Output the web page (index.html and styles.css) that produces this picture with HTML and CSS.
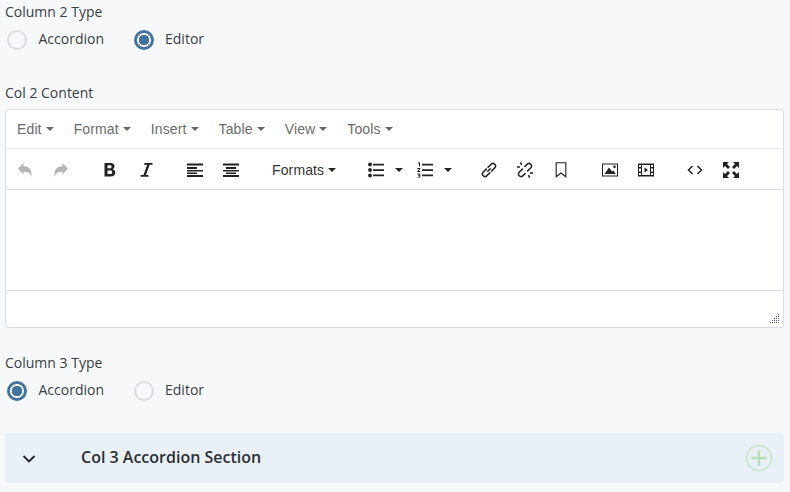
FILE: index.html
```html
<!DOCTYPE html>
<html lang="en">
<head>
<meta charset="utf-8">
<title>Columns</title>
<link rel="stylesheet" href="styles.css">
</head>
<body>
<main class="form">
  <div class="field">
    <div class="label">Column 2 Type</div>
    <div class="radios">
      <span class="radio"></span><span class="radio-text">Accordion</span>
      <span class="radio radio-on"></span><span class="radio-text">Editor</span>
    </div>
  </div>

  <div class="field field-editor">
    <div class="label">Col 2 Content</div>
    <div class="editor">
      <div class="menubar">
        <span class="menu">Edit<i class="caret"></i></span>
        <span class="menu">Format<i class="caret"></i></span>
        <span class="menu">Insert<i class="caret"></i></span>
        <span class="menu">Table<i class="caret"></i></span>
        <span class="menu">View<i class="caret"></i></span>
        <span class="menu">Tools<i class="caret"></i></span>
      </div>
      <div class="toolbar">
        <div class="group">
          <span class="btn"><svg viewBox="0 0 16 16" class="ico disabled"><path d="M1 6.500 6.500 1v3.300c5 0 8.500 2.700 8 10.700-1.200-4-3.500-5.200-8-5.200V12.500z"/></svg></span>
          <span class="btn"><svg viewBox="0 0 16 16" class="ico disabled"><path d="M15 6.500 9.500 1v3.300c-5 0-8.500 2.700-8 10.700 1.200-4 3.500-5.200 8-5.200V12.500z"/></svg></span>
        </div>
        <div class="group">
          <span class="btn"><svg viewBox="0 0 16 16" class="ico"><path fill-rule="evenodd" d="M2.500 1h6.300c2.400 0 3.700 1.300 3.700 3.300 0 1.400-.7 2.400-1.900 2.900 1.700.4 2.700 1.600 2.700 3.300 0 2.600-1.800 4-4.500 4H2.500zm3 2.300v3h2.600c1 0 1.500-.6 1.500-1.500s-.5-1.500-1.500-1.500zm0 5.200v3.500h2.900c1.200 0 1.800-.6 1.800-1.800s-.6-1.700-1.800-1.700z"/></svg></span>
          <span class="btn"><svg viewBox="0 0 16 16" class="ico"><path d="M6.500 1h8v1.800h-2.900L8 13h2.500v1.800h-8V13h3L9.100 2.800H6z"/></svg></span>
        </div>
        <div class="group">
          <span class="btn"><svg viewBox="0 0 16 16" class="ico"><path d="M0 1.500h16v2H0zM0 5h10v2H0zM0 8h16v1.500H0zM0 10.500h10V12H0zM0 13h16v2H0z"/></svg></span>
          <span class="btn"><svg viewBox="0 0 16 16" class="ico"><path d="M0 1.500h16v2H0zM3 5h10v2H3zM0 8h16v1.500H0zM3 10.500h10V12H3zM0 13h16v2H0z"/></svg></span>
        </div>
        <div class="group">
          <span class="btn-text">Formats<i class="caret caret-dark"></i></span>
        </div>
        <div class="group group-lists">
          <span class="btn btn-split"><svg viewBox="0 0 16 16" class="ico"><path d="M5 1.800h11v1.700H5zM5 7.200h11v1.700H5zM5 12.500h11v1.700H5z"/><circle cx="2" cy="2.500" r="1.900"/><circle cx="2" cy="8" r="1.900"/><circle cx="2" cy="13.500" r="1.900"/></svg><i class="caret caret-dark caret-split"></i></span>
          <span class="btn btn-split"><svg viewBox="0 0 16 16" class="ico"><path d="M5 1.800h11v1.700H5zM5 7.200h11v1.700H5zM5 12.500h11v1.700H5zM.8.500h2.200v4H2V1.500H.8zM.3 6h3v.9L1.600 9h1.800v1H.3v-.9l1.900-2.200H.3zM.3 11.500h3v4h-3v-.8h2.100v-.8H1v-.7h1.400v-.8H.3z"/></svg><i class="caret caret-dark caret-split"></i></span>
        </div>
        <div class="group">
          <span class="btn"><svg viewBox="0 0 16 16" class="ico line"><path d="M6.300 9.700 9.700 6.300M5.800 6.600 1.900 10.500a2.600 2.600 0 0 0 3.600 3.600l3.900-3.900M10.200 9.400l3.900-3.900a2.600 2.600 0 0 0-3.600-3.600L6.600 5.800"/></svg></span>
          <span class="btn"><svg viewBox="0 0 16 16" class="ico line"><path d="M5.800 6.600 1.900 10.500a2.600 2.600 0 0 0 3.600 3.600l3-3M10.200 9.400l3.900-3.900a2.600 2.600 0 0 0-3.600-3.600l-3 3M0 5h3M3.500.3l1 2.700M13 11h3M11.500 13l1 2.700"/></svg></span>
          <span class="btn"><svg viewBox="0 0 16 16" class="ico line line-thin"><path d="M3.200.8h9.600v14L8 11l-4.800 3.800z"/></svg></span>
        </div>
        <div class="group">
          <span class="btn"><svg viewBox="0 0 16 16" class="ico"><path fill-rule="evenodd" d="M0 1.500h16v13H0zm1 1v11h14v-11z"/><path d="M2.500 12 7 5.500l3 4 1.500-1 2.200 3.500z"/><circle cx="12.500" cy="4.800" r="1.300"/></svg></span>
          <span class="btn"><svg viewBox="0 0 16 16" class="ico"><path fill-rule="evenodd" d="M0 1.500h16v13H0zM1 3v2h2V3zm0 3.500v3h2v-3zM1 11v2h2v-2zM13 3v2h2V3zm0 3.500v3h2v-3zm0 4.500v2h2v-2zM4 3v10h8V3z"/><path d="M6.500 5.500 10 8l-3.500 2.500z"/></svg></span>
        </div>
        <div class="group">
          <span class="btn"><svg viewBox="0 0 16 16" class="ico line"><path d="M5.500 4 1.500 8l4 4M10.500 4l4 4-4 4"/></svg></span>
          <span class="btn"><svg viewBox="0 0 16 16" class="ico"><path d="M0 0h6L4 2l3 3-2 2-3-3-2 2zM16 0v6l-2-2-3 3-2-2 3-3-2-2zM0 16v-6l2 2 3-3 2 2-3 3 2 2zM16 16h-6l2-2-3-3 2-2 3 3 2-2z"/></svg></span>
        </div>
      </div>
      <div class="edit-area"></div>
      <div class="statusbar">
        <svg viewBox="0 0 10 10" class="grip"><path d="M8 0h1.100v1.100H8zM6 2h1.100v1.100H6zM8 2h1.100v1.100H8zM4 4h1.100v1.100H4zM6 4h1.100v1.100H6zM8 4h1.100v1.100H8zM2 6h1.100v1.100H2zM4 6h1.100v1.100H4zM6 6h1.100v1.100H6zM8 6h1.100v1.100H8zM0 8h1.100v1.100H0zM2 8h1.100v1.100H2zM4 8h1.100v1.100H4zM6 8h1.100v1.100H6zM8 8h1.100v1.100H8z"/></svg>
      </div>
    </div>
  </div>

  <div class="field field-col3">
    <div class="label">Column 3 Type</div>
    <div class="radios">
      <span class="radio radio-on"></span><span class="radio-text">Accordion</span>
      <span class="radio"></span><span class="radio-text">Editor</span>
    </div>
  </div>

  <section class="accordion">
    <svg viewBox="0 0 14 10" class="chevron"><path d="M1.500 2 7 7.500 12.500 2"/></svg>
    <h3 class="accordion-title">Col 3 Accordion Section</h3>
    <svg viewBox="0 0 28 28" class="add"><circle cx="14" cy="14" r="12.500"/><path class="add-cross" d="M14 6.500v15M6.500 14h15"/></svg>
  </section>
</main>
</body>
</html>
```

FILE: styles.css
```css
* { box-sizing: border-box; }

html, body {
  margin: 0;
  height: 100%;
  overflow: hidden;
}

body {
  background: #f6f8fa;
  color: #3a3f45;
  font-family: "Open Sans", sans-serif;
  font-size: 14px;
}

.form {
  padding: 2px 6px 0 5px;
}

.label {
  height: 20px;
  line-height: 20px;
}

.radios {
  display: flex;
  align-items: center;
  height: 24px;
  margin-top: 6px;
  padding-left: 2px;
}

.radio {
  width: 20px;
  height: 20px;
  flex: none;
  border: 2px solid #d9dee4;
  border-radius: 50%;
  background: #f7f8fa;
}

.radio-on {
  border: 3px solid #44739f;
  background: radial-gradient(circle, #44739f 0 5px, #fff 5.500px);
}

.radio-text {
  margin: 0 29.500px 2px 11.500px;
  line-height: 20px;
}

.field-editor {
  margin-top: 31px;
}

.editor {
  margin-top: 6px;
  height: 219px;
  display: flex;
  flex-direction: column;
  border: 1px solid #dcdde3;
  border-radius: 3px;
  background: #fff;
  font-family: "Liberation Sans", Arial, sans-serif;
  letter-spacing: 0.13px;
}

.menubar {
  display: flex;
  align-items: center;
  gap: 20px;
  height: 39px;
  padding: 0 0 0 11px;
  border-bottom: 1px solid #e6e8ec;
  color: #6b6b6b;
}

.menu {
  display: inline-flex;
  align-items: center;
  line-height: 20px;
}

.caret {
  display: inline-block;
  width: 0;
  height: 0;
  margin-left: 4px;
  border-top: 4px solid #666;
  border-left: 4px solid transparent;
  border-right: 4px solid transparent;
}

.caret-dark {
  border-top-color: #222;
}

.toolbar {
  display: flex;
  align-items: center;
  gap: 13px;
  height: 41px;
  padding: 2px 0 0 1px;
  border-bottom: 1px solid #dcdde3;
}

.group {
  display: flex;
  align-items: center;
}

.group-lists {
  margin-right: 2px;
}

.btn {
  display: flex;
  align-items: center;
  justify-content: center;
  width: 36px;
  height: 28px;
}

.btn-split {
  justify-content: flex-start;
  width: 49px;
  padding-left: 10px;
}

.caret-split {
  margin-left: 11px;
}

.btn-text {
  display: inline-flex;
  align-items: center;
  width: 83px;
  padding-left: 10px;
  color: #333;
  line-height: 20px;
}

.ico {
  width: 16px;
  height: 16px;
  flex: none;
  fill: #222;
}

.disabled {
  fill: #b5b5b5;
}

.line {
  fill: none;
  stroke: #222;
  stroke-width: 1.500;
}

.line-thin {
  stroke-width: 1.100;
}

.edit-area {
  height: 101px;
  border-bottom: 1px solid #dcdde3;
}

.statusbar {
  position: relative;
  flex: 1;
}

.grip {
  position: absolute;
  right: 3px;
  bottom: 3px;
  width: 10px;
  height: 10px;
  fill: #6f5f70;
}

.field-col3 {
  margin-top: 25px;
}

.accordion {
  display: flex;
  align-items: center;
  height: 50px;
  margin-top: 30px;
  padding: 0 11px 0 17px;
  border-radius: 3px;
  background: #e9f0f7;
}

.chevron {
  width: 14px;
  height: 10px;
  flex: none;
  margin-top: 2px;
  fill: none;
  stroke: #222;
  stroke-width: 1.800;
}

.accordion-title {
  flex: 1;
  margin: 0 0 2px 45px;
  color: #2b2f33;
  font-size: 16px;
  font-weight: 600;
}

.add {
  width: 28px;
  height: 28px;
  flex: none;
  fill: none;
  stroke: #c3e6c0;
  stroke-width: 1.500;
}

.add-cross {
  stroke: #b6e0b2;
  stroke-width: 2.500;
}
```
